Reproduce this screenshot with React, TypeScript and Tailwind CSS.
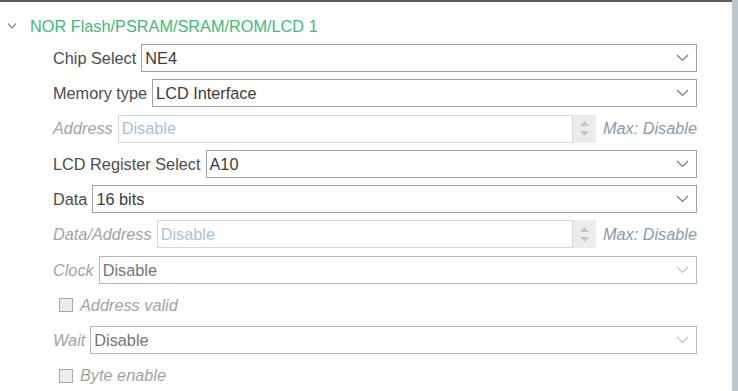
import type { ReactNode } from 'react';

const FONT = { fontFamily: '"Liberation Sans", Arial, sans-serif' };

function Chevron({ disabled }: { disabled?: boolean }) {
  return (
    <svg width="13" height="8" viewBox="0 0 13 8" className="shrink-0">
      <polyline
        points="1,1 6.5,6.5 12,1"
        fill="none"
        stroke={disabled ? '#c4c4c4' : '#7a7a7a'}
        strokeWidth="1.2"
      />
    </svg>
  );
}

function SelectRow({
  label,
  value,
  disabled,
}: {
  label: string;
  value: string;
  disabled?: boolean;
}) {
  return (
    <div className="flex items-center h-[28px] gap-[5px]">
      <span
        className={
          disabled ? 'italic text-[#a3a3a3] whitespace-nowrap' : 'text-[#4d4d4d] whitespace-nowrap'
        }
      >
        {label}
      </span>
      <div
        className={
          'flex-1 h-full flex items-center justify-between pl-[3px] pr-[7px] bg-white border ' +
          (disabled ? 'border-[#b8b8b8]' : 'border-[#a2a2a2]')
        }
      >
        <span className={disabled ? 'text-[#767676]' : 'text-[#3c3c3c]'}>{value}</span>
        <Chevron disabled={disabled} />
      </div>
    </div>
  );
}

function SpinRow({ label }: { label: string }) {
  return (
    <div className="flex items-center h-[28px] gap-[5px]">
      <span className="italic text-[#a3a3a3] whitespace-nowrap">{label}</span>
      <div className="flex-1 h-full flex items-center pl-[3px] bg-white border border-[#cddaea]">
        <span className="text-[#a9c2e0]">Disable</span>
      </div>
      <div className="-ml-[5px] w-[23px] h-full bg-[#ececec] flex flex-col items-center justify-center gap-[5px]">
        <svg width="9" height="5" viewBox="0 0 9 5">
          <polygon points="0,5 4.5,0 9,5" fill="#c6c6c6" />
        </svg>
        <svg width="9" height="5" viewBox="0 0 9 5">
          <polygon points="0,0 4.5,5 9,0" fill="#c6c6c6" />
        </svg>
      </div>
      <span className="ml-[2px] italic text-[#8a9aae] whitespace-nowrap">Max: Disable</span>
    </div>
  );
}

function CheckRow({ label }: { label: string }) {
  return (
    <div className="flex items-center h-[28px] gap-[7px] pl-[6px]">
      <div className="w-[14px] h-[14px] border border-[#a8a8a8] bg-[#ececec]" />
      <span className="italic text-[#a3a3a3]">{label}</span>
    </div>
  );
}

function Section({ title, children }: { title: string; children: ReactNode }) {
  return (
    <div>
      <div className="flex items-center gap-[13px] pl-[7px] h-[18px] mt-[15px]">
        <svg width="10" height="6" viewBox="0 0 10 6">
          <polyline points="1,0.5 5,5 9,0.5" fill="none" stroke="#8c8c8c" strokeWidth="1.2" />
        </svg>
        <span className="text-[#43b97c]">{title}</span>
      </div>
      <div className="flex flex-col gap-[7.3px] mt-[9px] pl-[53px] pr-[35px]">{children}</div>
    </div>
  );
}

export default function App() {
  return (
    <div className="w-[738px] h-[391px] flex bg-white overflow-hidden text-[16.3px]" style={FONT}>
      <div className="flex-1 border-t-2 border-[#5e5e5e]">
        <Section title="NOR Flash/PSRAM/SRAM/ROM/LCD 1">
          <SelectRow label="Chip Select" value="NE4" />
          <SelectRow label="Memory type" value="LCD Interface" />
          <SpinRow label="Address" />
          <SelectRow label="LCD Register Select" value="A10" />
          <SelectRow label="Data" value="16 bits" />
          <SpinRow label="Data/Address" />
          <SelectRow label="Clock" value="Disable" disabled />
          <CheckRow label="Address valid" />
          <SelectRow label="Wait" value="Disable" disabled />
          <CheckRow label="Byte enable" />
        </Section>
      </div>
      <div className="w-[6px] bg-[#bcc6cb]" />
    </div>
  );
}
